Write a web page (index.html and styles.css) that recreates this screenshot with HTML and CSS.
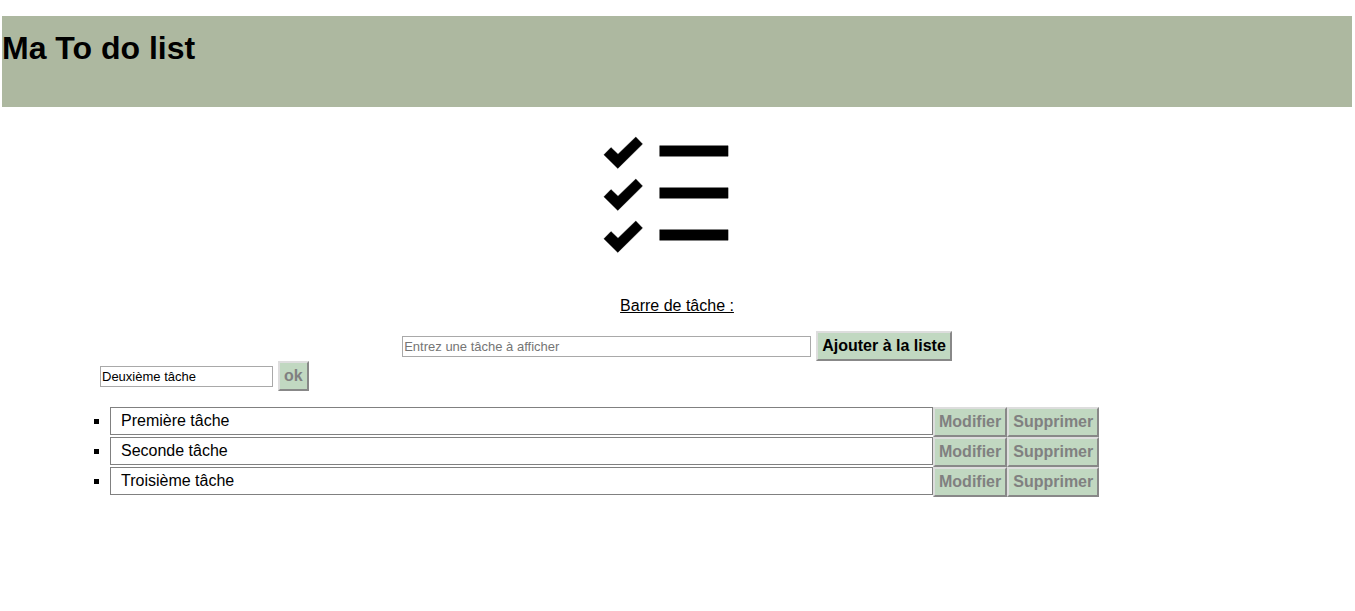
FILE: index.html
```html
<!DOCTYPE html>
<html lang="fr">
<head>
<meta charset="utf-8">
<meta name="viewport" content="width=device-width, initial-scale=1">
<title>Ma To do list</title>
<link rel="stylesheet" href="styles.css">
</head>
<body>
<header class="banner">
  <h1 class="banner-title">Ma To do list</h1>
</header>
<main>
  <div class="picture">
    <svg width="174" height="160" viewBox="0 0 174 160" role="img" aria-label="Liste de tâches">
      <defs>
        <g id="task-line" stroke="#000" stroke-opacity="0.5" stroke-width="0.8">
          <path d="M13.9 37.8 L21 30.6 L28 37.2 L45.8 20 L52.5 27.1 L27.8 51.4 Z"/>
          <path d="M69.7 28.7 H138.1 V39.3 H69.7 Z"/>
        </g>
      </defs>
      <use href="#task-line"/>
      <use href="#task-line" y="42"/>
      <use href="#task-line" y="84"/>
    </svg>
  </div>
  <form class="add-form">
    <label class="add-label" for="new-task">Barre de tâche :</label>
    <div class="row">
      <input class="field field-wide" id="new-task" type="text" placeholder="Entrez une tâche à afficher">
      <button class="btn btn-main" type="button">Ajouter à la liste</button>
    </div>
  </form>
  <form class="edit-form row">
    <input class="field field-small" type="text" value="Deuxième tâche" aria-label="Modifier la tâche">
    <button class="btn" type="button">ok</button>
  </form>
  <ul class="tasks">
    <li>
      <div class="task">
        <span class="task-name">Première tâche</span>
        <button class="btn" type="button">Modifier</button>
        <button class="btn" type="button">Supprimer</button>
      </div>
    </li>
    <li>
      <div class="task">
        <span class="task-name">Seconde tâche</span>
        <button class="btn" type="button">Modifier</button>
        <button class="btn" type="button">Supprimer</button>
      </div>
    </li>
    <li>
      <div class="task">
        <span class="task-name">Troisième tâche</span>
        <button class="btn" type="button">Modifier</button>
        <button class="btn" type="button">Supprimer</button>
      </div>
    </li>
  </ul>
</main>
</body>
</html>
```
FILE: styles.css
```css
* {
  box-sizing: border-box;
}

body {
  margin: 16px 3px 0 2px;
  background: #fff;
  color: #000;
  font: 16px/18px "Liberation Sans", Arial, sans-serif;
}

.banner {
  min-height: 91px;
  padding-top: 14px;
  background: #adb8a0;
}

.banner-title {
  margin: 0;
  font-size: 32px;
  line-height: 36px;
}

.picture {
  display: flex;
  justify-content: center;
  padding: 10px 0 20px;
}

.add-form {
  display: flex;
  flex-direction: column;
  align-items: center;
  gap: 16px;
}

.add-label {
  text-decoration: underline;
}

.row {
  display: flex;
  align-items: center;
  gap: 5px;
}

.field {
  height: 21px;
  padding: 1px;
  border: 1px solid #a9a9a9;
  border-radius: 0;
  background: #fff;
  color: #000;
  font: 13px "Liberation Sans", Arial, sans-serif;
}

.field::placeholder {
  color: #757575;
}

.field-wide {
  width: 409px;
}

.field-small {
  width: 173px;
}

.btn {
  height: 30px;
  padding: 0 4px;
  border: 2px solid;
  border-color: #ddd #888 #888 #ddd;
  border-radius: 0;
  background: #c1d8c1;
  color: #808080;
  font: bold 16px/18px "Liberation Sans", Arial, sans-serif;
}

.btn-main {
  color: #000;
}

.edit-form {
  padding-left: calc(8% - 10px);
}

.tasks {
  margin: 16px 0;
  padding-left: 8%;
  list-style: square;
}

.task {
  display: flex;
}

.task-name {
  flex: 0 1 823px;
  height: 28px;
  padding: 4px 10px;
  border: 1px solid #808080;
}
```
